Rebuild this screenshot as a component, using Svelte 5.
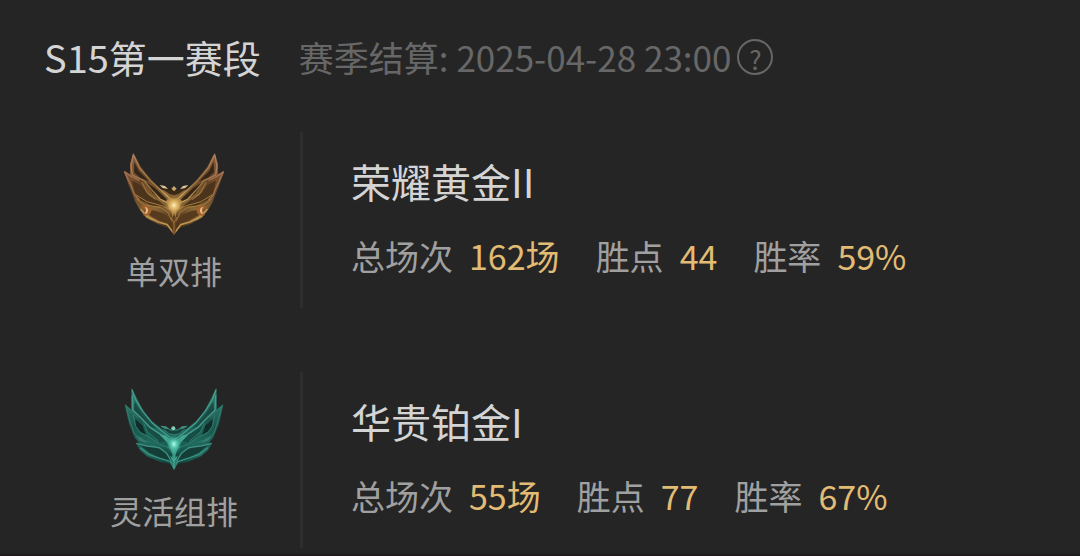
<script>
  const season = 'S15第一赛段'
  const settledAt = '2025-04-28 23:00'

  const queues = [
    {
      name: '单双排',
      tier: 'gold',
      rank: '荣耀黄金II',
      stats: [
        { label: '总场次', value: '162场' },
        { label: '胜点', value: '44' },
        { label: '胜率', value: '59%' },
      ],
    },
    {
      name: '灵活组排',
      tier: 'platinum',
      rank: '华贵铂金I',
      stats: [
        { label: '总场次', value: '55场' },
        { label: '胜点', value: '77' },
        { label: '胜率', value: '67%' },
      ],
    },
  ]

  // left half and its mirror image
  const sides = ['', 'translate(384 0) scale(-1 1)']
</script>

{#snippet gold()}
  <svg class="emblem" viewBox="27 21 330 264" aria-hidden="true">
    <defs>
      <linearGradient id="gold-blade" x1="0" y1="0" x2="0.7" y2="1">
        <stop offset="0" stop-color="#94643e" />
        <stop offset="0.4" stop-color="#664626" />
        <stop offset="0.75" stop-color="#8a6735" />
        <stop offset="1" stop-color="#4e351b" />
      </linearGradient>
      <linearGradient id="gold-edge" x1="0" y1="0" x2="1" y2="1">
        <stop offset="0" stop-color="#b08062" />
        <stop offset="0.6" stop-color="#9c753f" />
        <stop offset="1" stop-color="#e0bd78" />
      </linearGradient>
      <radialGradient id="gold-glow">
        <stop offset="0" stop-color="#fff0b8" />
        <stop offset="0.4" stop-color="#dfb465" stop-opacity="0.8" />
        <stop offset="1" stop-color="#8a6430" stop-opacity="0" />
      </radialGradient>
    </defs>
    {#each sides as side}
      <g transform={side} stroke-linejoin="round">
        <path fill="url(#gold-blade)" d="M70 38 L92 80 L124 119 L152 148 L192 160 V282 L180 266 L143 252 L108 233 L88 207 L76 186 L57 137 L41 92 L60 103 L60 72 Z" />
        <path fill="#35261a" d="M73 66 L87 94 L116 123 L91 114 L72 97 Z" />
        <path fill="#4b341b" d="M66 122 L92 135 L115 166 L148 184 L167 201 L125 197 L91 180 L75 160 Z" />
        <path fill="#352518" d="M108 127 L134 143 L164 171 L181 190 L151 179 L128 160 Z" />
        <path fill="#553a1d" d="M100 207 L136 212 L168 224 L184 252 L147 241 L116 224 Z" />
        <path fill="none" stroke="url(#gold-edge)" stroke-width="4" d="M70 44 L89 84 L123 124 L163 160 L187 183 M70 44 L63 77 L67 105 L102 122 L124 148 L150 177 L184 194" />
        <path fill="none" stroke="#a2704e" stroke-width="4" d="M43 95 L65 110 L88 121 M44 97 L62 134 L75 166 L88 180" />
        <path fill="none" stroke="#a77b3d" stroke-width="3" d="M77 164 L111 185 L158 198 L187 211 M96 127 L112 158 L137 179 M79 177 L104 195 L151 202 L174 218 L186 245" />
        <path fill="none" stroke="#bd9350" stroke-width="5" d="M92 207 L110 229 L145 246 L172 254 L190 278 M111 224 Q117 238 135 240" />
        <path fill="#a3602f" d="M94 199 Q118 191 125 211 Q121 232 99 226 Q115 215 94 199 Z" />
        <path fill="#e6bd83" d="M108 201 Q120 209 110 221 L104 221 Q112 212 105 202 Z" />
        <path fill="#3b2817" d="M150 140 L169 145 L178 150 L192 148 V166 L177 161 Z" />
        <path fill="#dfc596" d="M149 135 L165 138 L174 147 L158 144 Z" />
        <path fill="#c9a468" d="M184 146 L192 138 V154 Z" />
      </g>
    {/each}
    <path fill="#b98a43" d="M169 182 L180 173 L192 178 L204 173 L215 182 L208 203 L200 213 L192 255 L184 213 L176 203 Z" />
    <ellipse cx="192" cy="196" rx="33" ry="35" fill="url(#gold-glow)" />
    <path fill="#5e3d1e" d="M192 219 L200 246 L196 279 L192 286 L188 279 L184 246 Z" />
    <path fill="none" stroke="#bf8d49" stroke-width="2" d="M183 231 L192 249 L201 231 M192 248 V284" />
  </svg>
{/snippet}

{#snippet platinum()}
  <svg class="emblem" viewBox="27 36 330 264" aria-hidden="true">
    <defs>
      <linearGradient id="platinum-blade" x1="0" y1="0" x2="0.7" y2="1">
        <stop offset="0" stop-color="#348a7a" />
        <stop offset="0.4" stop-color="#1b574e" />
        <stop offset="0.75" stop-color="#1f6b5f" />
        <stop offset="1" stop-color="#124840" />
      </linearGradient>
      <radialGradient id="platinum-glow">
        <stop offset="0" stop-color="#b0ffea" />
        <stop offset="0.4" stop-color="#54c7af" stop-opacity="0.8" />
        <stop offset="1" stop-color="#1f7768" stop-opacity="0" />
      </radialGradient>
    </defs>
    {#each sides as side}
      <g transform={side} stroke-linejoin="round">
        <path fill="url(#platinum-blade)" d="M65 38 L79 67 L97 101 L122 135 L155 161 L192 168 V284 L181 266 L151 261 L111 244 L90 226 L77 204 L89 206 L74 188 L58 150 L51 119 L44 87 L63 103 Z" />
        <path fill="#1a4a43" d="M75 82 L98 121 L136 160 L110 149 L85 125 L71 105 Z" />
        <path fill="#102d2a" d="M76 133 L97 151 L108 180 L88 168 L77 150 Z" />
        <path fill="#164d45" d="M105 154 L148 173 L173 196 L149 203 L124 185 Z" />
        <path fill="#153d38" d="M91 211 L122 213 L158 226 L184 256 L145 246 L116 232 Z" />
        <path fill="none" stroke="#479c8b" stroke-width="4" d="M66 44 L77 74 L99 110 L128 145 L163 174 L188 193 M67 61 L69 106 L96 132 L120 157 L161 184" />
        <path fill="none" stroke="#317a6b" stroke-width="3" d="M47 91 L68 114 L85 129 M48 95 L59 134 L72 174 L87 191 L121 202 M69 119 L77 154 L91 173 L121 188 L151 209 L187 222 M101 145 L112 170 L146 199" />
        <path fill="none" stroke="#3f8f7f" stroke-width="4" d="M79 205 L111 213 L148 218 L170 235 L188 265 M91 218 L116 238 L150 250 L181 260 L191 278" />
        <path fill="#367c70" d="M77 181 L96 190 L112 205 L89 197 Z" />
        <path fill="#18443d" d="M158 160 L192 166 V182 L177 178 Z" />
        <path fill="none" stroke="#2b7467" stroke-width="4" d="M153 154 L170 159 L182 165 L192 165 M163 166 L177 177 L192 180" />
        <path fill="#408e7f" d="M151 152 L168 154 L178 162 L164 161 Z" />
      </g>
    {/each}
    <path fill="#43a892" d="M150 180 L166 181 L192 200 L218 181 L234 180 L211 204 L201 227 L192 251 L183 227 L173 204 Z" />
    <ellipse cx="192" cy="207" rx="26" ry="33" fill="url(#platinum-glow)" />
    <path fill="#288070" d="M192 230 L202 252 L196 277 L192 286 L188 277 L182 252 Z" />
    <path fill="none" stroke="#60c8b2" stroke-width="2" d="M182 244 L192 257 L202 244 M192 225 V282" />
    <circle cx="190" cy="160" r="6" fill="#82cebc" />
  </svg>
{/snippet}

<main>
  <header>
    <h1>{season}</h1>
    <p class="settle">赛季结算: <time datetime="2025-04-28T23:00">{settledAt}</time></p>
    <button type="button" class="help" aria-label="赛季结算说明">?</button>
  </header>

  {#each queues as queue}
    <section>
      <div class="queue">
        {#if queue.tier === 'gold'}
          {@render gold()}
        {:else}
          {@render platinum()}
        {/if}
        <span>{queue.name}</span>
      </div>
      <div class="detail">
        <h2>{queue.rank}</h2>
        <dl>
          {#each queue.stats as stat}
            <div class="stat">
              <dt>{stat.label}</dt>
              <dd>{stat.value}</dd>
            </div>
          {/each}
        </dl>
      </div>
    </section>
  {/each}
</main>

<style>
  :global(body) {
    margin: 0;
    background: #252525;
  }

  main {
    padding: 31px 44px 6px;
    border-bottom: 2px solid #211b20;
    background: #252525;
    color: #d4d4d4;
    font-family: 'Noto Sans CJK SC', sans-serif;
  }

  header {
    display: flex;
    align-items: center;
    height: 52px;
    margin-bottom: 49px;
    white-space: nowrap;
  }

  h1,
  h2,
  p,
  dl,
  dd {
    margin: 0;
    font-weight: 400;
  }

  h1 {
    margin-right: 38px;
    font-size: 38px;
    line-height: 52px;
  }

  .settle {
    color: #676767;
    font-size: 35px;
    line-height: 52px;
  }

  .help {
    box-sizing: border-box;
    width: 36px;
    height: 36px;
    margin-left: 6px;
    padding: 4px 0 0;
    border: 2px solid #676767;
    border-radius: 50%;
    background: none;
    color: #676767;
    font-family: inherit;
    font-size: 26px;
    line-height: 28px;
    cursor: pointer;
  }

  section {
    display: grid;
    grid-template-columns: 256px 1fr;
    height: 176px;
  }

  section + section {
    margin-top: 64px;
  }

  .queue {
    display: flex;
    flex-direction: column;
    align-items: center;
    padding: 15px 0 0 4px;
    color: #a0a0a0;
    font-size: 32px;
    line-height: 48px;
  }

  .emblem {
    width: 110px;
    height: 88px;
    margin-bottom: 11px;
  }

  .detail {
    padding: 19px 0 0 48px;
    border-left: 3px solid #2e2e2e;
    white-space: nowrap;
  }

  h2 {
    margin-bottom: 20px;
    font-size: 40px;
    line-height: 60px;
  }

  dl {
    display: flex;
    gap: 36px;
    font-size: 34px;
    line-height: 50px;
  }

  .stat {
    display: flex;
    gap: 16px;
  }

  dt {
    color: #a0a0a0;
  }

  dd {
    color: #e2bc74;
  }
</style>
